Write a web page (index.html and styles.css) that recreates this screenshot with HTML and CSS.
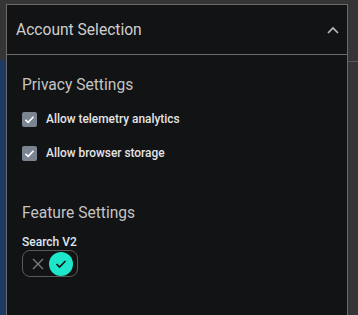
FILE: index.html
```html
<!DOCTYPE html>
<html>
<head>
<meta charset="utf-8">
<link rel="stylesheet" href="styles.css">
</head>
<body>
<div class="panel">
  <div class="header">
    <span class="title">Account Selection</span>
    <svg class="chevron" width="12" height="8" viewBox="0 0 12 8"><path d="M1 7 L6 2 L11 7" fill="none" stroke="#bdbdbd" stroke-width="1.6"/></svg>
  </div>
  <div class="body">
    <h2 class="section first">Privacy Settings</h2>
    <label class="check-row">
      <span class="box"><svg width="11" height="9" viewBox="0 0 11 9"><path d="M1.5 4.8 L4.2 7.3 L9.5 1.8" fill="none" stroke="#fff" stroke-width="1.6"/></svg></span>
      <span class="label">Allow telemetry analytics</span>
    </label>
    <label class="check-row">
      <span class="box"><svg width="11" height="9" viewBox="0 0 11 9"><path d="M1.5 4.8 L4.2 7.3 L9.5 1.8" fill="none" stroke="#fff" stroke-width="1.6"/></svg></span>
      <span class="label">Allow browser storage</span>
    </label>
    <h2 class="section second">Feature Settings</h2>
    <div class="field-label">Search V2</div>
    <div class="toggle">
      <span class="off"><svg width="12" height="12" viewBox="0 0 12 12"><path d="M1 1 L11 11 M11 1 L1 11" stroke="#7a7a7a" stroke-width="1.4"/></svg></span>
      <span class="knob"><svg width="12" height="10" viewBox="0 0 12 10"><path d="M1.5 5 L4.5 8 L10.5 2" fill="none" stroke="#111" stroke-width="1.6"/></svg></span>
    </div>
  </div>
</div>
</body>
</html>
```

FILE: styles.css
```css
html, body {
  margin: 0;
  padding: 0;
  height: 100%;
  overflow: hidden;
}
body {
  font-family: Roboto, "Liberation Sans", sans-serif;
  background:
    linear-gradient(#1e3a60, #1e3a60) 0 60px / 6px 100% no-repeat,
    linear-gradient(#5a5a5a, #5a5a5a) 348px 61px / 10px 1px no-repeat,
    #353535;
  padding-top: 4px;
  padding-left: 6px;
  box-sizing: border-box;
}
.panel {
  width: 342px;
  box-sizing: border-box;
  border: 1px solid #6a6a6a;
  border-bottom: none;
  background: #121314;
  height: 311px;
}
.header {
  height: 49px;
  border-bottom: 1px solid #6a6a6a;
  display: flex;
  align-items: center;
  justify-content: space-between;
  padding: 0 8px 0 9px;
}
.title {
  font-size: 15.6px;
  color: #cfcfcf;
}
.chevron {
  display: block;
}
.body {
  padding: 0 15px;
  display: flex;
  flex-direction: column;
  align-items: flex-start;
}
.section {
  font-size: 15.6px;
  font-weight: 400;
  color: #c4c4c4;
  margin: 0;
}
.section.first {
  margin-top: 21px;
  margin-bottom: 8px;
}
.section.second {
  margin-top: 34px;
  margin-bottom: 13px;
}
.check-row {
  display: flex;
  align-items: center;
  gap: 9px;
  height: 34px;
}
.box {
  width: 15px;
  height: 15px;
  border-radius: 2px;
  background: #7b8592;
  display: flex;
  align-items: center;
  justify-content: center;
}
.box svg { display: block; }
.label {
  font-size: 11.9px;
  font-weight: 500;
  color: #e4e4e4;
}
.field-label {
  font-size: 12px;
  font-weight: 500;
  color: #dbe7f1;
  margin-bottom: 1px;
}
.toggle {
  width: 56px;
  height: 27px;
  box-sizing: border-box;
  border: 1px solid #5a5a5a;
  border-radius: 8px;
  display: flex;
  align-items: center;
  padding: 0 4px 0 9px;
  justify-content: space-between;
}
.off svg, .knob svg { display: block; }
.knob {
  width: 24px;
  height: 24px;
  border-radius: 50%;
  background: #1de6cb;
  display: flex;
  align-items: center;
  justify-content: center;
}
```
